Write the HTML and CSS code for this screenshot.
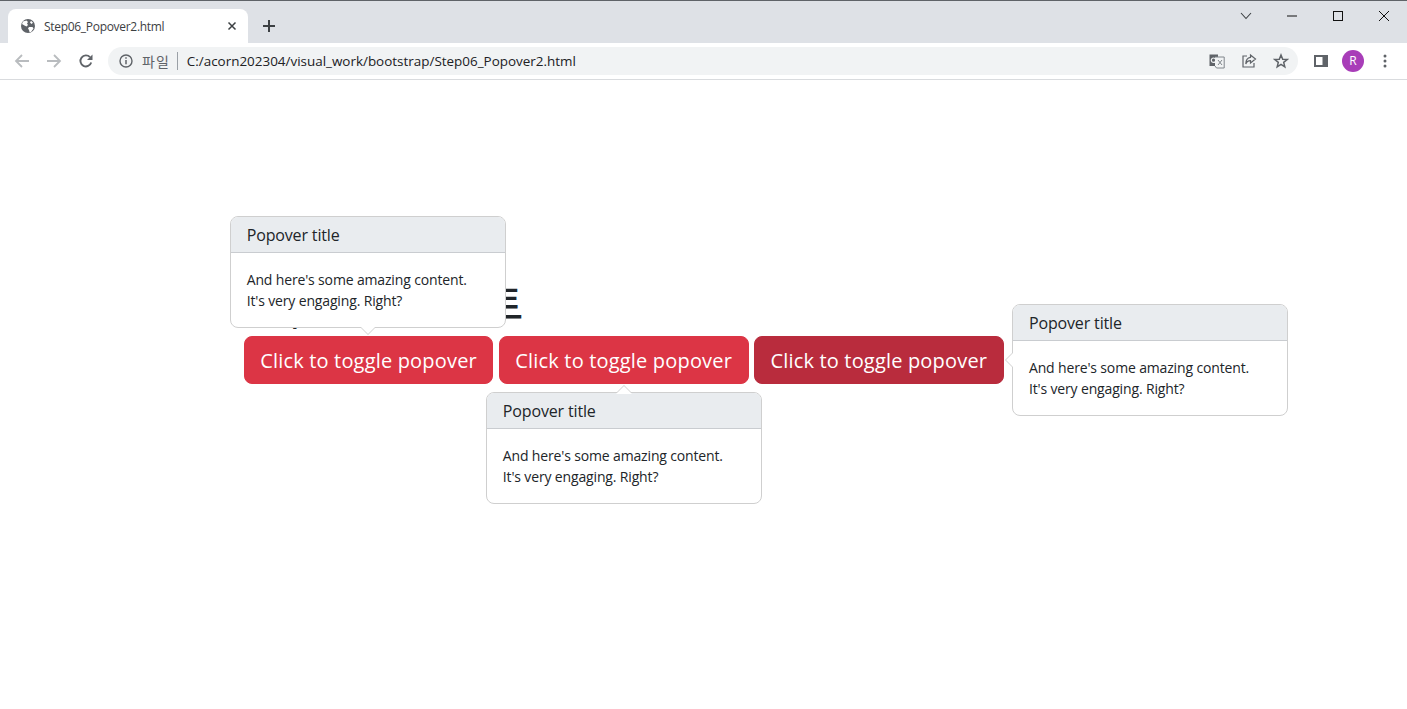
FILE: index.html
```html
<!DOCTYPE html>
<html lang="ko">
<head>
<meta charset="utf-8">
<title>Step06_Popover2.html</title>
<link rel="stylesheet" href="styles.css">
</head>
<body>
<header class="browser">
  <div class="tabstrip">
    <div class="tab">
      <svg class="favicon" viewBox="0 0 16 16" width="16" height="16"><circle cx="8" cy="8" r="7" fill="#5f6368"/><path d="M3 3.5 6.5 2.5 8 4 7 5.5 8 7 6.5 8.5 4.5 7.5 2 6ZM9 9h3.5l1 1.5-2.5 3.5H9.500L9 12 8 10.500ZM11 2.800l2 2-1.500 1.200L10 4.500Z" fill="#fff"/></svg>
      <span class="tab-title">Step06_Popover2.html</span>
      <svg class="tab-close" viewBox="0 0 10 10" width="10" height="10"><path d="M1.500 1.500l7 7M8.500 1.500l-7 7" stroke="#3c4043" stroke-width="1.500" fill="none"/></svg>
    </div>
    <svg class="new-tab" viewBox="0 0 14 14" width="14" height="14"><path d="M7 1v12M1 7h12" stroke="#3c4043" stroke-width="2" fill="none"/></svg>
    <div class="window-controls">
      <span class="win-btn win-list"><svg viewBox="0 0 12 8" width="12" height="8"><path d="M1 1l5 5.500L11 1" stroke="#3c4043" stroke-width="1.100" fill="none"/></svg></span>
      <span class="win-btn"><svg viewBox="0 0 12 12" width="12" height="12"><path d="M1 6h10" stroke="#111" stroke-width="1" fill="none"/></svg></span>
      <span class="win-btn"><svg viewBox="0 0 12 12" width="12" height="12"><rect x="1.500" y="1.500" width="9" height="9" stroke="#111" stroke-width="1" fill="none"/></svg></span>
      <span class="win-btn"><svg viewBox="0 0 12 12" width="12" height="12"><path d="M1 1l10 10M11 1 1 11" stroke="#111" stroke-width="1" fill="none"/></svg></span>
    </div>
  </div>
  <div class="toolbar">
    <span class="tool"><svg viewBox="0 0 16 16" width="16" height="16"><path d="M15 8H2.500M8 2 2 8l6 6" stroke="#b9bcbf" stroke-width="1.800" fill="none"/></svg></span>
    <span class="tool"><svg viewBox="0 0 16 16" width="16" height="16"><path d="M1 8h12.500M8 2l6 6-6 6" stroke="#b9bcbf" stroke-width="1.800" fill="none"/></svg></span>
    <span class="tool"><svg viewBox="0 0 16 16" width="16" height="16"><path d="M13.200 9.500A5.500 5.500 0 1 1 12 4.200" stroke="#5f6368" stroke-width="1.900" fill="none"/><path d="M14.500 1.500v5.500H9Z" fill="#5f6368"/></svg></span>
    <div class="omnibox">
      <svg class="info" viewBox="0 0 14 14" width="14" height="14"><circle cx="7" cy="7" r="6" stroke="#5f6368" stroke-width="1.400" fill="none"/><path d="M7 6v4.200" stroke="#5f6368" stroke-width="1.500"/><path d="M7 3.300v1.500" stroke="#5f6368" stroke-width="1.500"/></svg>
      <span class="scheme">파일</span>
      <span class="sep"></span>
      <span class="url">C:/acorn202304/visual_work/bootstrap/Step06_Popover2.html</span>
      <span class="omni-actions">
        <svg viewBox="0 0 16 16" width="16" height="16"><path d="M.5 1.500h8.500v11.500H.5Z" fill="#5f6368"/><path d="M6 4h9.200v11H7.500L6 13" fill="#f1f3f4" stroke="#80868b" stroke-width="1"/><circle cx="4.500" cy="7.200" r="2.200" fill="none" stroke="#f1f3f4" stroke-width="1.200"/><path d="M9 7l4 5M13 7l-4 5" stroke="#80868b" stroke-width="1"/></svg>
        <svg viewBox="0 0 16 16" width="16" height="16"><path d="M6 3H2v11h11v-4" stroke="#5f6368" stroke-width="1.200" fill="none"/><path d="M9.500 2l5 4-5 4V7.700C7 7.700 5.500 9 4.800 11c0-4 1.700-6.300 4.700-6.700Z" stroke="#5f6368" stroke-width="1.200" fill="none"/></svg>
        <svg viewBox="0 0 16 16" width="16" height="16"><path d="M8 2l1.700 4.200 4.500.3-3.500 2.900 1.100 4.400L8 11.400l-3.800 2.400 1.100-4.400L1.800 6.500l4.500-.3Z" stroke="#5f6368" stroke-width="1.500" fill="none"/></svg>
      </span>
    </div>
    <span class="tool panel-tool"><svg viewBox="0 0 14 14" width="14" height="14"><path d="M0 1h14v12H0Z" fill="#5f6368"/><path d="M2 3h6.500v8H2Z" fill="#fff"/></svg></span>
    <span class="avatar">R</span>
    <span class="tool menu-tool"><svg viewBox="0 0 4 14" width="4" height="14"><circle cx="2" cy="2" r="1.500" fill="#5f6368"/><circle cx="2" cy="7" r="1.500" fill="#5f6368"/><circle cx="2" cy="12" r="1.500" fill="#5f6368"/></svg></span>
  </div>
</header>
<main class="page">
  <h1 class="heading">Popover 테스트</h1>
  <div class="buttons">
    <div class="toggle">
      <button class="btn">Click to toggle popover</button>
      <aside class="popover popover-top">
        <h3 class="popover-header">Popover title</h3>
        <p class="popover-body">And here's some amazing content. It's very engaging. Right?</p>
      </aside>
    </div>
    <div class="toggle">
      <button class="btn">Click to toggle popover</button>
      <aside class="popover popover-bottom">
        <h3 class="popover-header">Popover title</h3>
        <p class="popover-body">And here's some amazing content. It's very engaging. Right?</p>
      </aside>
    </div>
    <div class="toggle">
      <button class="btn btn-active">Click to toggle popover</button>
      <aside class="popover popover-end">
        <h3 class="popover-header">Popover title</h3>
        <p class="popover-body">And here's some amazing content. It's very engaging. Right?</p>
      </aside>
    </div>
  </div>
</main>
</body>
</html>
```
FILE: styles.css
```css
* { box-sizing: border-box; }
html, body { margin: 0; height: 100%; overflow: hidden; }
body {
  background: #fff;
  color: #212529;
  font-family: "Open Sans", "Noto Sans CJK KR", "Liberation Sans", sans-serif;
}
.browser { display: flex; flex-direction: column; }
.tabstrip {
  display: flex;
  align-items: flex-end;
  height: 43px;
  background: #dee1e6;
  border-top: 1px solid #5f6368;
  padding-left: 8px;
}
.tab {
  display: flex;
  align-items: center;
  flex: none;
  width: 240px;
  height: 34px;
  background: #fff;
  border-radius: 8px 8px 0 0;
  padding: 0 0 0 12px;
}
.favicon { flex: none; width: 16px; height: 16px; }
.tab-title {
  margin-left: 8px;
  width: 183px;
  font-size: 12px;
  letter-spacing: -0.3px;
  color: #3c4043;
  white-space: nowrap;
}
.tab-close { flex: none; }
.new-tab { flex: none; align-self: flex-end; margin: 0 0 10px 14px; }
.window-controls { display: flex; align-self: flex-start; margin-left: auto; }
.win-btn { display: flex; width: 46px; height: 29px; align-items: center; justify-content: center; }
.toolbar {
  display: flex;
  align-items: center;
  height: 37px;
  background: #fff;
  border-bottom: 1px solid #d9dbde;
  padding: 0 6px 1px 6px;
}
.tool { display: flex; flex: none; width: 32px; height: 28px; align-items: center; justify-content: center; }
.omnibox {
  display: flex;
  align-items: center;
  flex: none;
  width: 1190px;
  height: 28px;
  margin-left: 6px;
  padding-left: 11px;
  background: #f1f3f4;
  border-radius: 14px;
}
.info { flex: none; }
.scheme { margin-left: 9px; font-size: 14px; letter-spacing: 1px; color: #5f6368; font-family: "Noto Sans CJK KR", sans-serif; }
.sep { width: 1px; height: 18px; margin: 0 9px 0 7px; background: #9aa0a6; }
.url { font-size: 13.45px; color: #202124; white-space: nowrap; }
.omni-actions { display: flex; gap: 16px; margin-left: auto; padding-right: 9px; }
.panel-tool { margin-left: 7px; }
.avatar {
  display: flex;
  flex: none;
  width: 22px;
  height: 22px;
  margin-left: 5px;
  align-items: center;
  justify-content: center;
  border-radius: 50%;
  background: #a83db8;
  color: #fff;
  font-size: 12px;
}
.menu-tool { margin-left: 5px; }
.page { padding: 200px 0 0 243.7px; }
.heading {
  margin: 0 0 8px;
  font-size: 40px;
  line-height: 48px;
  font-weight: 500;
  letter-spacing: -1px;
  word-spacing: 13px;
  white-space: nowrap;
  font-family: "Open Sans", "Noto Sans CJK KR", sans-serif;
}
.buttons { display: flex; align-items: flex-start; gap: 5.45px; }
.toggle { position: relative; flex: none; }
.btn {
  display: block;
  width: 249.7px;
  height: 48px;
  border: 1px solid #dc3545;
  border-radius: 8px;
  background: #dc3545;
  color: #fff;
  font: 20px/30px "Open Sans", sans-serif;
  letter-spacing: 0.18px;
  white-space: nowrap;
  padding: 2px 0 0;
}
.btn-active { background: #b92c3d; border-color: #b92c3d; }
.popover {
  position: absolute;
  z-index: 2;
  width: 276px;
  background: #fff;
  border: 1px solid #cfcfcf;
  border-radius: 8px;
}
.popover::before, .popover::after {
  content: "";
  position: absolute;
  width: 0;
  height: 0;
  border: 8px solid transparent;
}
.popover-top { bottom: 56px; left: -14px; }
.popover-top::before { top: 100%; left: 129px; border-bottom-width: 0; border-top-color: #cfcfcf; }
.popover-top::after { top: calc(100% - 1px); left: 129px; border-bottom-width: 0; border-top-color: #fff; }
.popover-bottom { top: 56px; left: -13px; }
.popover-bottom::before { bottom: 100%; left: 129px; border-top-width: 0; border-bottom-color: #cfcfcf; }
.popover-bottom::after { bottom: calc(100% - 1px); left: 129px; border-top-width: 0; border-bottom-color: #fff; }
.popover-end { top: -32px; left: 258px; }
.popover-end::before { top: 47px; right: 100%; border-left-width: 0; border-right-color: #cfcfcf; }
.popover-end::after { top: 47px; right: calc(100% - 1px); border-left-width: 0; border-right-color: #fff; }
.popover-header {
  margin: 0;
  height: 36px;
  padding: 9px 16px 7px;
  background: #e9ecef;
  border-bottom: 1px solid #c9ccd0;
  border-radius: 7px 7px 0 0;
  font-size: 16px;
  line-height: 19px;
  font-weight: 400;
  letter-spacing: -0.15px;
}
.popover-body {
  margin: 0;
  padding: 16px 30px 16px 16px;
  font-size: 14px;
  line-height: 21px;
  letter-spacing: -0.15px;
}
```
